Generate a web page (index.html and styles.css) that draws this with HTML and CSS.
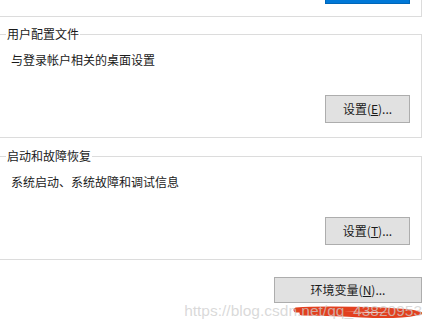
FILE: index.html
```html
<!DOCTYPE html>
<html lang="zh-CN">
<head>
<meta charset="utf-8">
<link rel="stylesheet" href="styles.css">
</head>
<body>
<div class="page">
  <div class="group-top">
    <button class="btn btn-primary" type="button" aria-label="确定"></button>
  </div>
  <fieldset class="group g1">
    <legend>用户配置文件</legend>
    <p class="desc">与登录帐户相关的桌面设置</p>
    <div class="actions"><button class="btn" type="button">设置(<u>E</u>)...</button></div>
  </fieldset>
  <fieldset class="group g2">
    <legend>启动和故障恢复</legend>
    <p class="desc">系统启动、系统故障和调试信息</p>
    <div class="actions"><button class="btn" type="button">设置(<u>T</u>)...</button></div>
  </fieldset>
  <div class="footer">
    <button class="btn btn-wide" type="button">环境变量(<u>N</u>)...</button>
  </div>
  <div class="watermark">
    <svg class="scribble" width="130" height="14" viewBox="0 0 130 14">
      <path d="M4 5 C30 3 60 4 90 5 C105 6 118 6 124 8 C110 11 90 11 70 10 C50 9 30 8 10 8" fill="none" stroke="#e2401f" stroke-width="5" stroke-linecap="round"/>
    </svg>
    <span class="wm-text">https://blog.csdn.net/qq_43820953</span>
  </div>
</div>
</body>
</html>
```
FILE: styles.css
```css
* { box-sizing: border-box; }
html, body { margin: 0; padding: 0; background: #ffffff; }
body {
  width: 431px;
  height: 328px;
  overflow: hidden;
  font-family: "Noto Sans CJK SC", "Microsoft YaHei", sans-serif;
  font-size: 12px;
  color: #1a1a1a;
}
.page {
  position: relative;
  display: flex;
  flex-direction: column;
  height: 328px;
}
.group-top {
  height: 17px;
  margin: 0 9px 0 -1px;
  border-right: 1px solid #dcdcdc;
  border-bottom: 1px solid #dcdcdc;
  display: flex;
  justify-content: flex-end;
  padding-right: 11px;
}
.btn {
  font-family: "Noto Sans CJK SC", "Microsoft YaHei", sans-serif;
  font-size: 12px;
  color: #1a1a1a;
  background: #e1e1e1;
  border: 1px solid #adadad;
  width: 85px;
  height: 28px;
  padding: 0;
  margin: 0;
  line-height: 16px;
}
.btn u { text-decoration: underline; text-underline-offset: 1px; }
.btn-primary {
  height: 24px;
  margin-top: -20px;
  background: #0078d7;
  border-color: #0066b8;
  color: #fff;
}
.group {
  margin: 9px 9px 0 -1px;
  padding: 0 11px 14px 11px;
  border: 1px solid #dcdcdc;
  min-width: 0;
}
.group legend {
  margin-left: -5px;
  padding: 0 1px;
  line-height: 16px;
  color: #1a1a1a;
}
.desc {
  margin: 10px 0 0 0;
  line-height: 16px;
}
.actions {
  display: flex;
  justify-content: flex-end;
  margin-top: 27px;
}
.g2 { margin-top: 10px; }
.footer {
  display: flex;
  justify-content: flex-end;
  margin: 17px 9px 0 0;
}
.btn-wide {
  width: 148px;
  height: 26px;
}
.watermark {
  position: absolute;
  right: 9px;
  top: 301px;
  height: 20px;
}
.scribble {
  position: absolute;
  left: 108px;
  top: 4px;
}
.wm-text {
  position: relative;
  font-family: "Liberation Sans", Arial, sans-serif;
  font-size: 15.5px;
  line-height: 20px;
  color: rgba(205, 205, 205, 0.75);
  white-space: nowrap;
}
```
